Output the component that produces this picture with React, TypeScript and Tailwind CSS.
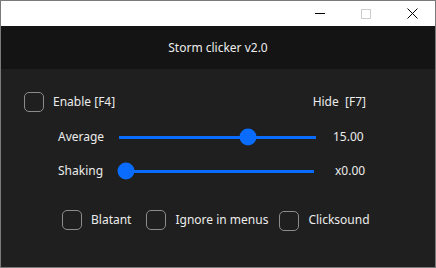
import React from 'react';

const Box: React.FC<{ className?: string }> = ({ className = '' }) => (
  <div className={`w-5 h-5 rounded-[5px] border-[1.5px] border-[#8c8c8c] shrink-0 ${className}`} />
);

const Slider: React.FC<{ pct: number; width: number }> = ({ pct, width }) => (
  <div className="relative h-[3px] bg-[#0a6cff]" style={{ width }}>
    <span
      className="absolute top-1/2 -translate-x-1/2 -translate-y-1/2 w-[17px] h-[17px] rounded-full bg-[#0a6cff]"
      style={{ left: `${pct}%` }}
    />
  </div>
);

export default function App() {
  return (
    <div
      className="w-[436px] h-[268px] border border-[#7a7a7a] flex flex-col bg-[#1f1f1f] text-[#ececec] text-[12px] overflow-hidden"
      style={{ fontFamily: '"Noto Sans", "Open Sans", sans-serif' }}
    >
      {/* title bar */}
      <div className="h-[25px] bg-white flex items-center justify-end shrink-0">
        <div className="w-[46px] flex justify-center">
          <span className="w-[10px] h-px bg-black" />
        </div>
        <div className="w-[46px] flex justify-center">
          <span className="w-[10px] h-[10px] border border-[#cccccc]" />
        </div>
        <div className="w-[46px] flex justify-center">
          <svg width="11" height="11" viewBox="0 0 11 11">
            <path d="M0.5 0.5L10.5 10.5M10.5 0.5L0.5 10.5" stroke="#000" strokeWidth="1" />
          </svg>
        </div>
      </div>

      {/* header */}
      <div className="h-[43px] bg-[#141414] flex items-center justify-center shrink-0">
        Storm clicker v2.0
      </div>

      {/* body */}
      <div className="flex flex-col pt-[23px]">
        <div className="flex items-center pl-[23px] pr-[69px] h-5">
          <Box />
          <span className="ml-[9px]">Enable [F4]</span>
          <span className="ml-auto">Hide&nbsp; [F7]</span>
        </div>

        <div className="flex items-center h-5 mt-[15px] pl-[57px]">
          <span className="w-[61px]">Average</span>
          <Slider pct={65.5} width={197} />
          <span className="ml-[17px]">15.00</span>
        </div>

        <div className="flex items-center h-5 mt-[14px] pl-[57px]">
          <span className="w-[61px]">Shaking</span>
          <Slider pct={3.5} width={195} />
          <span className="ml-[21px]">x0.00</span>
        </div>

        <div className="flex items-center h-5 mt-[29px] pl-[61px]">
          <Box />
          <span className="ml-[9px]">Blatant</span>
          <Box className="ml-[15px]" />
          <span className="ml-[9px]">Ignore in menus</span>
          <Box className="ml-[11px] mt-[2px]" />
          <span className="ml-[9px]">Clicksound</span>
        </div>
      </div>
    </div>
  );
}
